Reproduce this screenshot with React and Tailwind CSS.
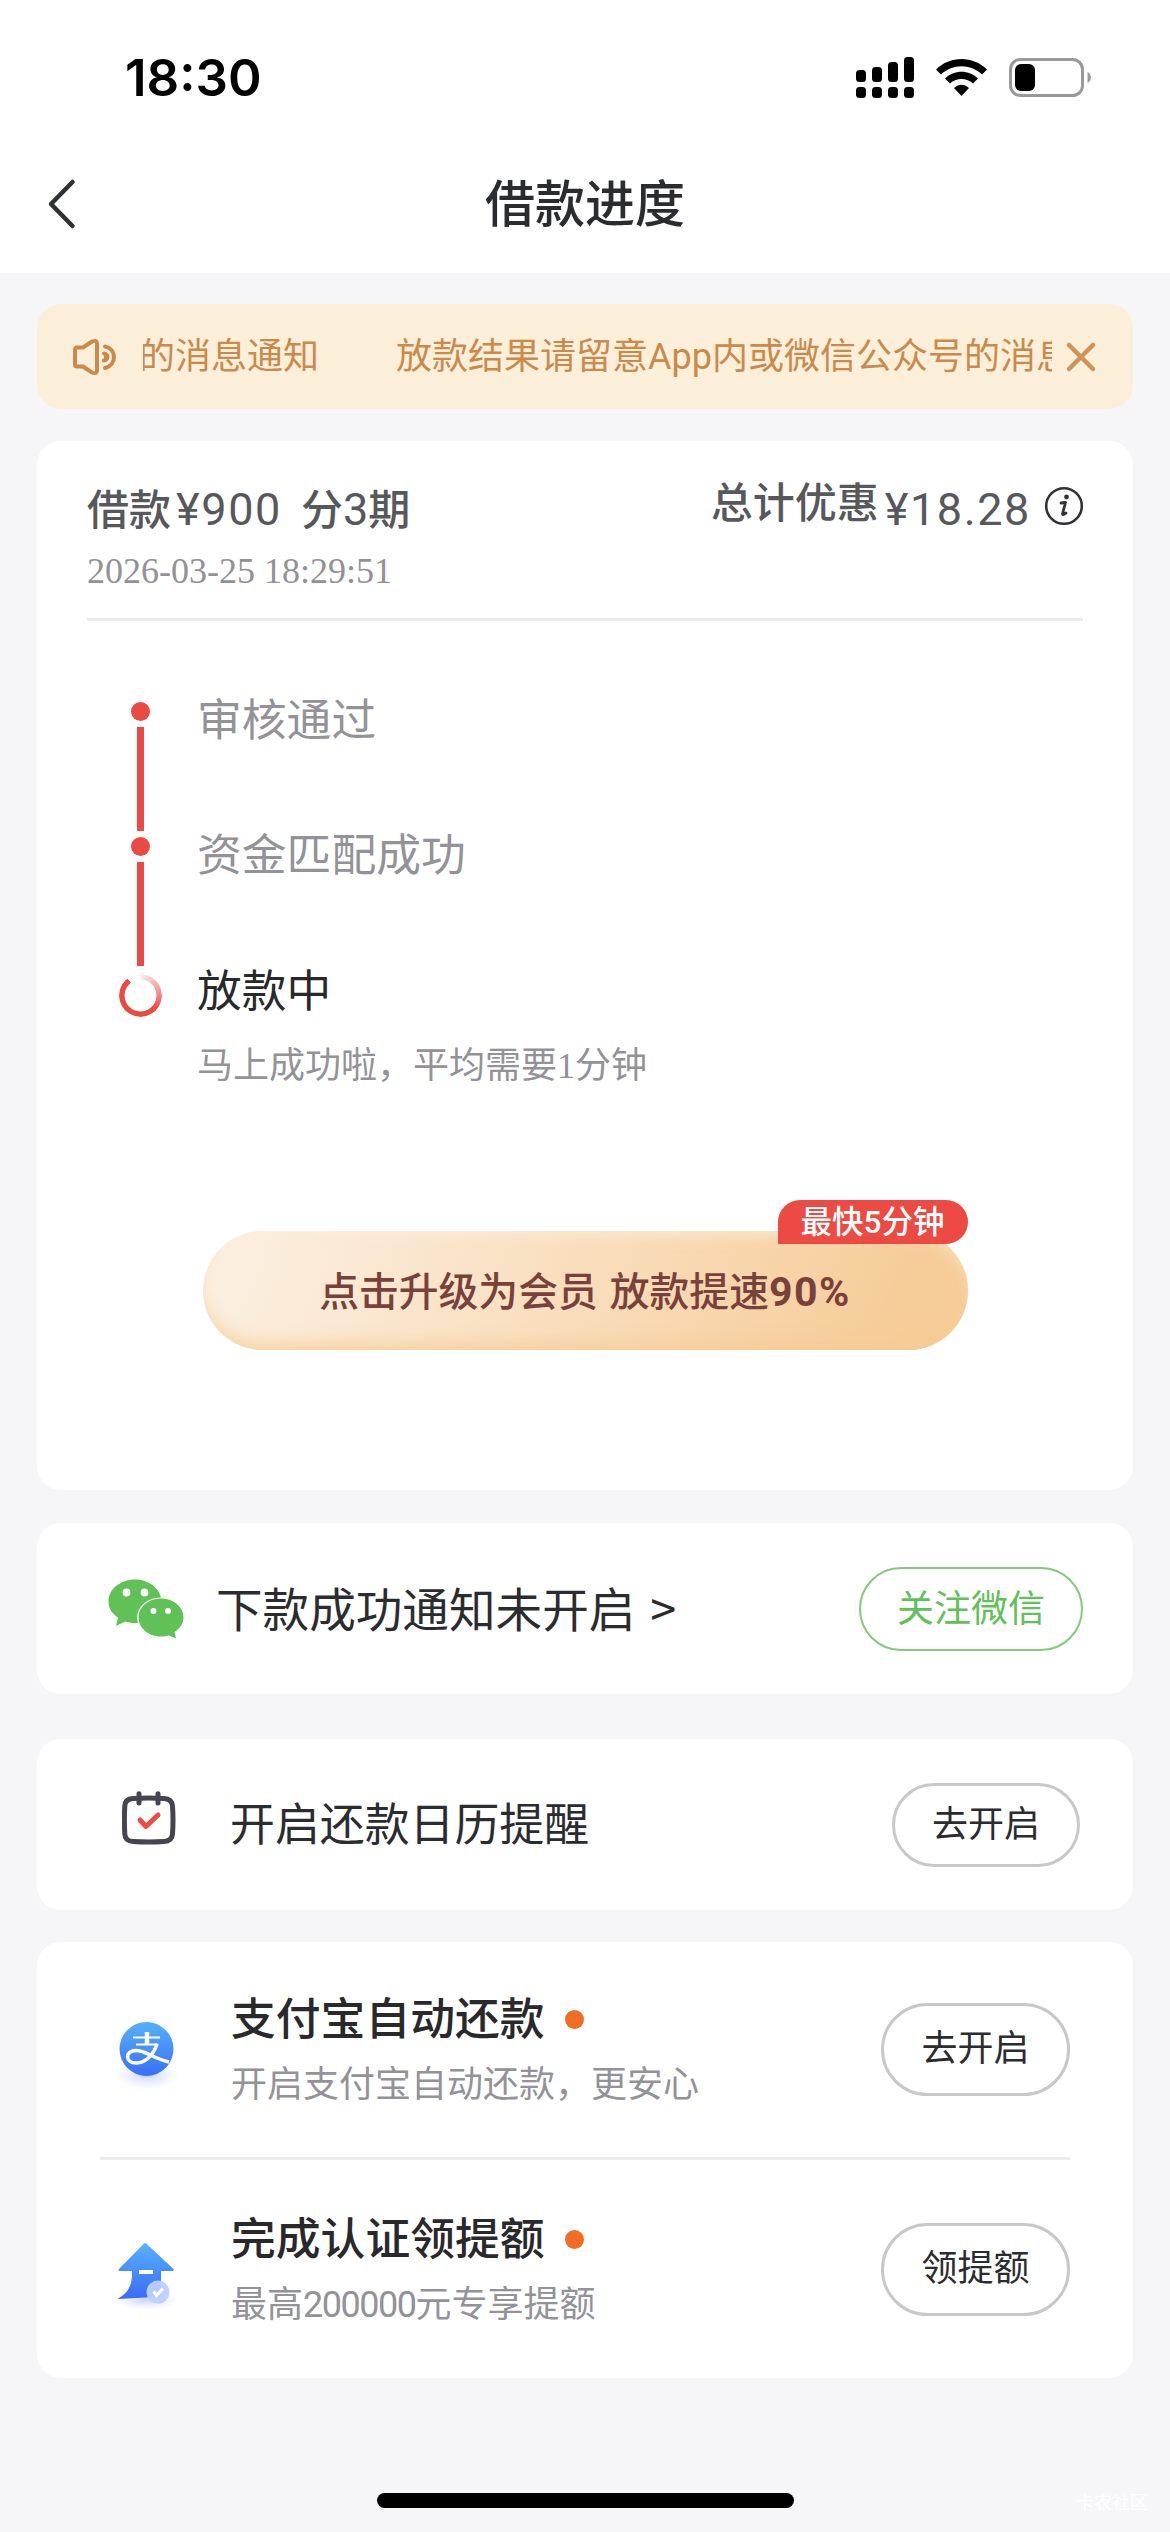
function StatusBar() {
  return (
    <div className="flex h-[136px] items-start justify-between pl-[125px] pr-[78px]">
      <div className="mt-[46px] font-['Inter',sans-serif] text-[51px] font-semibold leading-[64px] text-black">18:30</div>
      <svg className="mt-[52px]" width="236" height="52" viewBox="856 52 236 52" fill="#000">
        <rect x="856" y="70" width="10" height="12" rx="3.5" />
        <rect x="872" y="67" width="10" height="15" rx="3.5" />
        <rect x="888" y="62" width="10" height="20" rx="3.5" />
        <rect x="904" y="57" width="10" height="25" rx="3.5" />
        {[856, 872, 888, 904].map((x) => (
          <rect key={x} x={x} y="87" width="10" height="11" rx="3.5" />
        ))}
        <path d="M936 69.5 C950 55.5 973 55.5 987 69.5 L982 74.5 C970.500 63.5 952.500 63.5 941 74.5 Z" />
        <path d="M945 78.500 C954 69.500 969 69.500 978 78.500 L973 83.500 C967 77.500 956 77.500 950 83.500 Z" />
        <path d="M954 88 C958.500 83.500 964.500 83.500 969 88 L961.500 96 Z" />
        <rect x="1010.500" y="59.500" width="72" height="36" rx="10" fill="none" stroke="#999" strokeWidth="3" />
        <rect x="1015" y="64" width="20" height="27" rx="6" />
        <path d="M1087.500 72 C1092 74 1092 81 1087.500 83 Z" fill="#999" />
      </svg>
    </div>
  );
}

function NavBar() {
  return (
    <div className="grid h-[137px] grid-cols-[485px_1fr_485px] items-center">
      <svg className="-mt-[2px] ml-[46px]" width="32" height="56" viewBox="0 0 32 56" fill="none">
        <path d="M26.500 6 L5 28 L26.500 50" stroke="#303134" strokeWidth="4.500" strokeLinecap="round" strokeLinejoin="round" />
      </svg>
      <h1 className="whitespace-nowrap text-center text-[50px] font-medium leading-[64px] text-[#2b2c2f]">借款进度</h1>
    </div>
  );
}

function Notice() {
  return (
    <div className="flex h-[105px] items-center rounded-[24px] bg-[#fcefd9] pl-[35px] pr-[36px] text-[#c98a4b]">
      <svg className="shrink-0" width="46" height="38" viewBox="0 0 46 38" fill="none" stroke="currentColor" strokeWidth="4" strokeLinecap="round" strokeLinejoin="round">
        <path d="M5 9.500 H11 L20 3.500 Q25 1.500 25 6 V32 Q25 36.500 20 34.500 L11 28.500 H5 Q3 28.500 3 26 V12 Q3 9.500 5 9.500 Z" />
        <path d="M33 8.500 C45 11 45 27 33 30" />
        <path d="M32 15.500 C36.500 16.500 36.500 21.500 32 22.500" fill="currentColor" />
      </svg>
      <div className="ml-[25px] w-[909px] shrink-0 overflow-hidden">
        <div className="-ml-[4px] flex gap-[77px] whitespace-nowrap text-[36px] leading-[54px]">
          <span>的消息通知</span>
          <span>放款结果请留意App内或微信公众号的消息通知</span>
        </div>
      </div>
      <svg className="ml-[13px] shrink-0" width="32" height="32" viewBox="0 0 32 32" fill="none">
        <path d="M4 4 L28 28 M28 4 L4 28" stroke="#cf9356" strokeWidth="4.500" strokeLinecap="round" />
      </svg>
    </div>
  );
}

function Step({ label }) {
  return (
    <div className="flex h-[135px]">
      <div className="flex w-[43px] flex-col items-center pt-[2px]">
        <i className="h-[19px] w-[19px] rounded-full bg-[#eb4a43]" />
        <i className="mt-[6px] h-[104px] w-[7px] bg-[#eb4a43]" />
      </div>
      <p className="-mt-[9px] ml-[35px] text-[44.800px] leading-[60px] text-[#929298]">{label}</p>
    </div>
  );
}

function Timeline() {
  return (
    <div className="mt-[79px] pl-[32px]">
      <Step label="审核通过" />
      <Step label="资金匹配成功" />
      <div className="flex">
        <i className="mt-[4px] h-[43px] w-[43px] rounded-full bg-[conic-gradient(#fdeceb_0deg,#f4928d_80deg,#eb4a43_130deg,#eb4a43_322deg,transparent_323deg)] [mask:radial-gradient(circle,transparent_15.500px,#000_16.300px)]" />
        <div className="-mt-[8px] ml-[35px]">
          <p className="text-[44.700px] leading-[60px] text-[#29292c]">放款中</p>
          <p className="mt-[17px] font-['Liberation_Serif','Noto_Sans_CJK_SC',serif] text-[36px] leading-[54px] text-[#929298]">马上成功啦，平均需要1分钟</p>
        </div>
      </div>
    </div>
  );
}

function Money({ children }) {
  return <span className="text-[45px] font-normal tracking-[1.600px]">{children}</span>;
}

function LoanCard() {
  return (
    <section className="mt-[32px] h-[1049px] rounded-[24px] bg-white px-[50px]">
      <div className="flex h-[177px] justify-between pt-[37px] text-[#57585b]">
        <div className="whitespace-nowrap">
          <h2 className="text-[42px] font-medium leading-[64px]">
            借款<span className="ml-[5px]"><Money>¥900</Money></span><span className="ml-[19px]">分<span className="text-[45px] font-normal">3</span>期</span>
          </h2>
          <p className="-mt-[2px] font-['Liberation_Serif',serif] text-[36px] leading-[60px] text-[#919196]">2026-03-25 18:29:51</p>
        </div>
        <div className="-mr-[1px] flex h-[64px] items-center whitespace-nowrap text-[42px] font-medium leading-[64px]">
          <span className="-mt-[12px]">总计优惠</span>
          <span className="ml-[6px]"><Money>¥18.28</Money></span>
          <svg className="-mt-[8px] ml-[13px]" width="40" height="40" viewBox="0 0 40 40" fill="none">
            <circle cx="20" cy="20" r="17.800" stroke="#333337" strokeWidth="2.600" />
            <circle cx="22.500" cy="11" r="2.400" fill="#333337" />
            <path d="M17 17 L21.500 16.500 L18.500 28 Q18.500 29.500 22 27" stroke="#333337" strokeWidth="2.800" strokeLinecap="round" strokeLinejoin="round" />
          </svg>
        </div>
      </div>
      <hr className="h-[3px] border-0 bg-[#ebebed]" />
      <Timeline />
      <div className="relative mx-auto mt-[138px] flex h-[119px] w-[765px] items-center justify-center rounded-full bg-[linear-gradient(115deg,#fbefe0_5%,#f9dfbf_45%,#f6cc98_90%)] pt-[4px] shadow-[inset_0_-14px_18px_-8px_rgba(246,203,146,0.8),inset_0_10px_16px_-6px_rgba(252,236,216,0.8)]">
        <span className="whitespace-nowrap text-[39.800px] font-medium leading-[60px] text-[#79413c]">点击升级为会员<span className="ml-[12px]">放款提速</span><span className="text-[41px] font-bold tracking-[1.500px]">90%</span></span>
        <span className="absolute -top-[31px] right-0 flex h-[44px] w-[190px] items-center justify-center rounded-[22px] rounded-bl-none bg-[#ec4a42] pt-px text-[31.500px] font-medium leading-[44px] text-white">最快5分钟</span>
      </div>
    </section>
  );
}

function WechatIcon() {
  return (
    <svg width="76" height="60" viewBox="0 0 76 60" fill="#60c156">
      <path d="M27 0.500 C12.500 0.500 0.500 10 0.500 22.500 C0.500 29.500 4 34.500 10 38.500 L8 47 L17 42.500 C20 43.500 25 44.500 30 44 C26 30 38 18.500 53 18.500 C50.500 8 39.500 0.500 27 0.500 Z" />
      <path d="M53 19.500 C40.500 19.500 30.500 28 30.500 38.500 C30.500 49 40.500 57.500 53 57.500 C56 57.500 58.500 57 61 56.500 L68 59.500 L66.500 53 C72 49.500 75.500 44.500 75.500 38.500 C75.500 28 65.500 19.500 53 19.500 Z" />
      <g fill="#fff">
        <circle cx="18.500" cy="13.500" r="3.900" /><circle cx="36.500" cy="13.500" r="3.900" />
        <circle cx="45.500" cy="32" r="3" /><circle cx="60" cy="32" r="3" />
      </g>
    </svg>
  );
}

function CalendarIcon() {
  return (
    <svg width="54" height="54" viewBox="0 0 54 54" fill="none" strokeLinecap="round" strokeLinejoin="round">
      <path d="M11 7.500 Q27 6.500 42 7.500 Q50 8 50.500 15 Q51.500 29 50.500 43 Q50 50 42 50.500 Q27 51.500 11 50.500 Q3 50 2.800 43 Q2 29 2.800 15 Q3 8 11 7.500 Z" stroke="#46454f" strokeWidth="5" />
      <path d="M17 2.800 V12 M36 2.800 V12" stroke="#46454f" strokeWidth="5" />
      <path d="M18 29 L24 35.500 L36 24" stroke="#ec4a42" strokeWidth="5" />
    </svg>
  );
}

function AlipayIcon() {
  return (
    <svg width="74" height="74" viewBox="0 0 74 74" fill="none">
      <defs>
        <linearGradient id="ali" x1="0" y1="0" x2="0" y2="1"><stop stopColor="#55b1fb" /><stop offset="1" stopColor="#3a6ff8" /></linearGradient>
        <radialGradient id="glow"><stop stopColor="#b9c8ff" stopOpacity=".8" /><stop offset="1" stopColor="#d5ddff" stopOpacity="0" /></radialGradient>
      </defs>
      <ellipse cx="37" cy="58" rx="32" ry="15" fill="url(#glow)" />
      <circle cx="36.500" cy="32" r="27" fill="url(#ali)" />
      <g stroke="#fff">
        <path d="M23 20.500 H50 M26 27.500 H45" strokeWidth="2.200" />
        <path d="M37 15 V27" strokeWidth="4.500" />
        <path d="M47 26.500 C44 38 35 46 26.500 46 C14.500 46 15 33.500 26 33.500 C36 33.500 42 41 59 45" strokeWidth="3.500" />
      </g>
    </svg>
  );
}

function UpgradeIcon() {
  return (
    <svg width="74" height="74" viewBox="0 0 74 74" fill="none">
      <defs>
        <linearGradient id="up" x1="0" y1="0" x2="0" y2="1"><stop stopColor="#55b4fb" /><stop offset="1" stopColor="#3a6af8" /></linearGradient>
      </defs>
      <ellipse cx="36" cy="63" rx="32" ry="10" fill="url(#glow)" />
      <path d="M34 6.500 Q35 5.500 36.200 6.500 L63.500 32 Q64.500 34 62 34 H51 V48 Q50 60 36 60.500 L7.500 62 Q21 55 22 40 V34 H10 Q7.500 34 9 32 Z" fill="url(#up)" />
      <rect x="29" y="33" width="14" height="4" fill="#fff" />
      <circle cx="48" cy="55" r="11.500" fill="#becefc" fillOpacity=".95" />
      <path d="M43.500 54.500 L46.500 58.500 L53 51.500" stroke="#fff" strokeWidth="3" />
    </svg>
  );
}

function Pill({ children, className }) {
  return (
    <button className={"ml-auto flex items-center justify-center whitespace-nowrap rounded-full border-solid " + className}>{children}</button>
  );
}

function Feature({ icon, title, sub, action }) {
  return (
    <div className="flex h-[217px] items-start">
      <div className="ml-[10px] mt-[75px] w-[74px]">{icon}</div>
      <div className="ml-[47px] mt-[48px] whitespace-nowrap">
        <h3 className="flex items-center text-[44.800px] font-medium leading-[60px] text-[#29292c]">
          {title}
          <i className="-mt-[2px] ml-[20px] h-[19px] w-[19px] rounded-full bg-[#f06c27]" />
        </h3>
        <p className="mt-[8px] text-[36px] leading-[54px] text-[#929298]">{sub}</p>
      </div>
      <Pill className="mt-[61px] h-[93px] w-[189px] border-[3px] border-[#c8c8c8] pb-[2px] text-[36px] text-[#2b2c2f]">{action}</Pill>
    </div>
  );
}

export default function App() {
  return (
    <div className="flex h-[2532px] w-[1170px] flex-col overflow-hidden bg-[#f6f6f9] font-[Roboto,'Noto_Sans_CJK_SC',sans-serif]">
      <header className="bg-white">
        <StatusBar />
        <NavBar />
      </header>
      <main className="px-[37px] pt-[31px]">
        <Notice />
        <LoanCard />
        <section className="mt-[33px] flex h-[171px] items-center rounded-[24px] bg-white pl-[71px] pr-[50px]">
          <WechatIcon />
          <p className="ml-[32px] whitespace-nowrap text-[46.600px] leading-[60px] text-[#2b2c2f]">下款成功通知未开启<span className="ml-[15px] font-['Noto_Sans_CJK_SC',sans-serif]">&gt;</span></p>
          <Pill className="h-[84px] w-[224px] border-2 border-[#7fcb7b] pt-[2px] text-[37px] text-[#5fc158]">关注微信</Pill>
        </section>
        <section className="mt-[45px] flex h-[171px] items-center rounded-[24px] bg-white pl-[85px] pr-[53px]">
          <div className="-mt-[13px]"><CalendarIcon /></div>
          <p className="ml-[54px] mt-[2px] text-[44.900px] leading-[60px] text-[#2b2c2f]">开启还款日历提醒</p>
          <Pill className="h-[84px] w-[188px] border-[3px] border-[#c8c8c8] pt-px text-[36px] text-[#2b2c2f]">去开启</Pill>
        </section>
        <section className="mt-[32px] h-[436px] rounded-[24px] bg-white px-[63px]">
          <Feature icon={<AlipayIcon />} title="支付宝自动还款" sub="开启支付宝自动还款，更安心" action="去开启" />
          <hr className="-mt-[2px] mb-[2px] h-[3px] border-0 bg-[#ebebed]" />
          <Feature icon={<UpgradeIcon />} title="完成认证领提额" sub={<>最高<span className="tracking-[-1.500px]">200000</span>元专享提额</>} action="领提额" />
        </section>
      </main>
      <footer className="mt-auto grid h-[39px] grid-cols-[377px_417px_1fr] items-start">
        <i className="col-start-2 h-[15px] rounded-full bg-black" />
        <span className="mr-[22px] text-right text-[18px] leading-[20px] text-white">卡农社区</span>
      </footer>
    </div>
  );
}
